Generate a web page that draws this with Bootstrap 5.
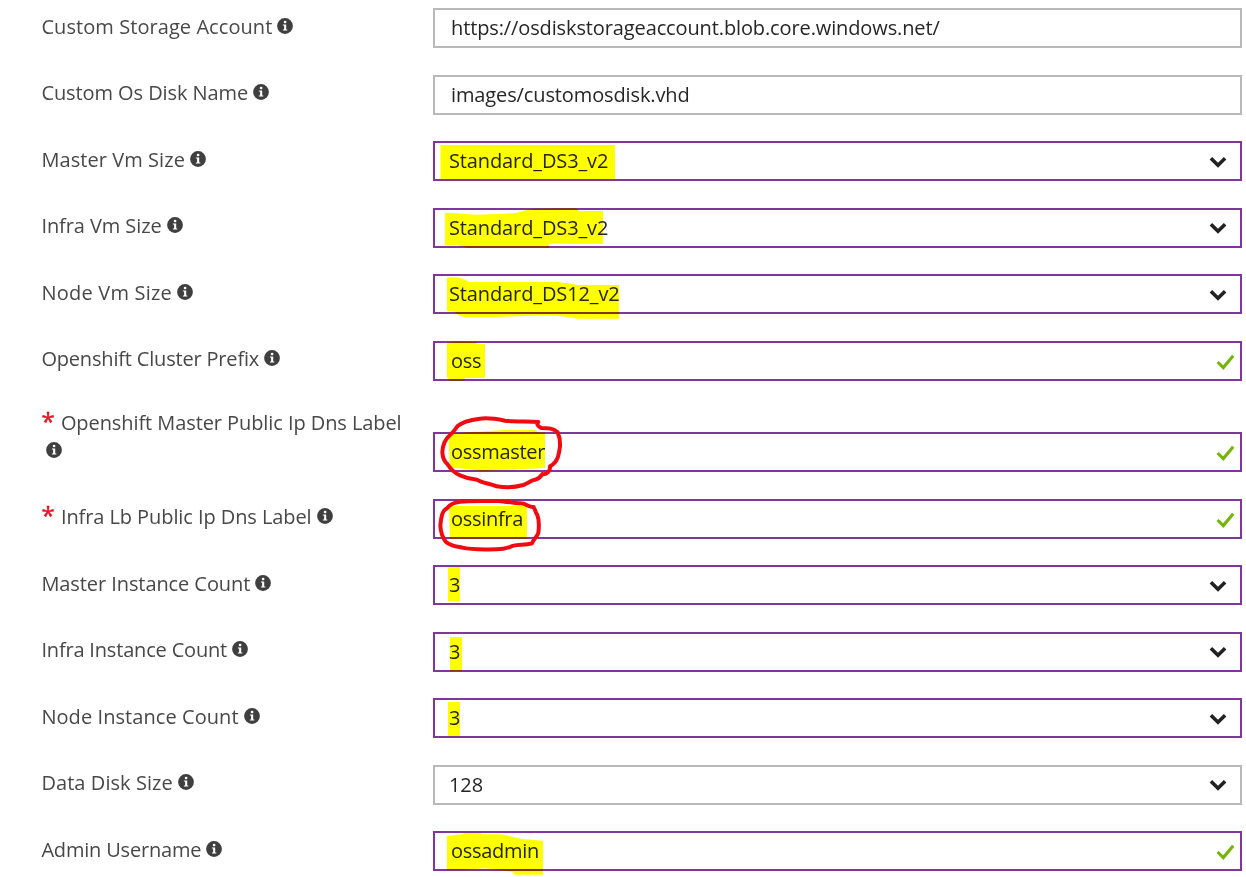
<!DOCTYPE html>
<html lang="en">
<head>
<meta charset="utf-8">
<meta name="viewport" content="width=device-width, initial-scale=1">
<title>Template parameters</title>
<link href="https://cdn.jsdelivr.net/npm/bootstrap@5.3.0/dist/css/bootstrap.min.css" rel="stylesheet">
<style>
  body { font-family: "Open Sans", "Noto Sans", sans-serif; font-size: 20px; line-height: 27.5px; color: #484848; background: #fff; overflow: hidden; }
  .param-form { padding: 8.25px 4px 0 41px; }
  .param-row { height: 66.5px; }
  .param-row.tall { height: 91.5px; }
  .param-row.tall .field { margin-top: 25px; }
  .param-label { width: 392px; padding: 4.5px 20px 0 .4px; letter-spacing: -.08px; }
  .param-label.loose { letter-spacing: .07px; }
  .param-label.looser { letter-spacing: .22px; }
  .param-label.snug { letter-spacing: -.18px; }
  .tall .param-label { padding-top: 1.8px; }
  .info { width: 16px; height: 16px; margin-left: 5px; vertical-align: 0; display: inline-block; }
  .req { color: #e81123; display: inline-block; width: 19.5px; font-size: 24px; line-height: 20px; letter-spacing: 0; -webkit-text-stroke: .5px #e81123; }
  .field { height: 40px; border: 2px solid #b9b9b9; color: #262626; padding: 0 16px 1px; letter-spacing: -.12px; }
  .field.edited { border-color: #80379b; }
  .field.choice { padding-left: 14px; padding-right: 13px; }
  .field.valid { padding-right: 5px; letter-spacing: -.3px; }
  .arrow { width: 18px; height: 12px; margin-top: 2px; }
  .tick { width: 19px; height: 16px; margin-top: 3px; }
  .ink { position: absolute; left: -2px; top: -2px; width: 200px; height: 40px; overflow: visible; pointer-events: none; }
  .marker { mix-blend-mode: multiply; fill: #ff0; }
  .pen { fill: none; stroke: #f00a12; stroke-width: 12; stroke-linejoin: round; stroke-linecap: round; }
</style>
</head>
<body>
<svg class="d-none">
  <symbol id="i-info" viewBox="0 0 16 16"><circle cx="8" cy="8" r="7.9" fill="#3f3f3f"/><circle cx="8.1" cy="4" r="1.35" fill="#fff"/><path d="M5.9 6.4h3.3v5h1.1v1.2H5.9v-1.2h1.2V7.6H5.9z" fill="#fff"/></symbol>
  <symbol id="i-arrow" viewBox="0 0 18 12"><path d="M1.9 2.2 9 9.2l7.1-7" fill="none" stroke="#222" stroke-width="3.6"/></symbol>
  <symbol id="i-tick" viewBox="0 0 19 16"><path d="M1.6 8 7.3 13.6 17.2 1.8" fill="none" stroke="#76b40c" stroke-width="3.1"/></symbol>
</svg>
<form class="param-form d-flex flex-column">
  <div class="param-row d-flex">
    <div class="param-label loose">Custom Storage Account<svg class="info"><use href="#i-info"/></svg></div>
    <div class="field flex-fill d-flex align-items-center">https://osdiskstorageaccount.blob.core.windows.net/</div>
  </div>
  <div class="param-row d-flex">
    <div class="param-label">Custom Os Disk Name<svg class="info"><use href="#i-info"/></svg></div>
    <div class="field flex-fill d-flex align-items-center">images/customosdisk.vhd</div>
  </div>
  <div class="param-row d-flex">
    <div class="param-label loose">Master Vm Size<svg class="info"><use href="#i-info"/></svg></div>
    <div class="field edited choice flex-fill d-flex align-items-center justify-content-between position-relative">
      <span>Standard_DS3_v2</span><svg class="arrow"><use href="#i-arrow"/></svg>
      <svg class="ink marker"><path d="M7.5 4H182V38H7.5z"/></svg>
    </div>
  </div>
  <div class="param-row d-flex">
    <div class="param-label">Infra Vm Size<svg class="info"><use href="#i-info"/></svg></div>
    <div class="field edited choice flex-fill d-flex align-items-center justify-content-between position-relative">
      <span>Standard_DS3_v2</span><svg class="arrow"><use href="#i-arrow"/></svg>
      <svg class="ink marker"><path d="M12 4.7Q27 5 42 6.700L82 5.300Q92 2 102 .7L143 .3 146 3H170V36L120 35.500 116 36.500V39.700H35L25 37.300H12z"/></svg>
    </div>
  </div>
  <div class="param-row d-flex">
    <div class="param-label looser">Node Vm Size<svg class="info"><use href="#i-info"/></svg></div>
    <div class="field edited choice flex-fill d-flex align-items-center justify-content-between position-relative">
      <span>Standard_DS12_v2</span><svg class="arrow"><use href="#i-arrow"/></svg>
      <svg class="ink marker"><path d="M14 3.500Q28 2 36 8H125Q135 9 145 11H186V44.700H145Q125 41 112 41.500L62 43H31Q25 42 22 38L14 36.700z"/></svg>
    </div>
  </div>
  <div class="param-row d-flex">
    <div class="param-label snug">Openshift Cluster Prefix<svg class="info"><use href="#i-info"/></svg></div>
    <div class="field edited valid flex-fill d-flex align-items-center justify-content-between position-relative">
      <span>oss</span><svg class="tick"><use href="#i-tick"/></svg>
      <svg class="ink marker"><path d="M14 1.700 22 1H42L44 3H52V36.700L32 37 31 39.700H17L14 36z"/></svg>
    </div>
  </div>
  <div class="param-row tall d-flex">
    <div class="param-label"><span class="req">*</span>Openshift Master Public Ip Dns Label <svg class="info"><use href="#i-info"/></svg></div>
    <div class="field edited valid flex-fill d-flex align-items-center justify-content-between position-relative">
      <span>ossmaster</span><svg class="tick"><use href="#i-tick"/></svg>
      <svg class="ink marker"><path d="M15.300 2 35 .3 72-2H102L105 .5H112V36L95 36.700 69 38 49 39 32 36.700 17 35.700z"/></svg>
      <svg class="ink"><path class="pen" transform="translate(-8 -32) scale(.33333)" d="M340 66C315 64 265 65 240 62C215 57 190 53 165 56C135 60 110 67 98 78C88 91 83 99 75 105C60 118 53 134 52 157C53 175 59 185 67 192C75 205 86 218 105 226C123 234 139 238 156 239C175 250 197 251 215 259C239 263 272 262 295 255C309 250 316 242 330 239C343 238 346 231 352 222C365 225 377 212 375 199C399 186 402 163 405 138C406 116 402 106 398 97C385 85 371 84 349 84C338 80 335 71 338 66"/></svg>
    </div>
  </div>
  <div class="param-row d-flex">
    <div class="param-label"><span class="req">*</span>Infra Lb Public Ip Dns Label<svg class="info"><use href="#i-info"/></svg></div>
    <div class="field edited valid flex-fill d-flex align-items-center justify-content-between position-relative">
      <span>ossinfra</span><svg class="tick"><use href="#i-tick"/></svg>
      <svg class="ink marker"><path d="M16 7H94V39.700H17z"/></svg>
      <svg class="ink"><path class="pen" transform="translate(-8 -99) scale(.33333)" d="M326 321C308 321 305 311 288 310C270 308 240 306 222 303C185 304 135 302 105 305C82 308 73 315 68 323C50 332 49 352 46 376C47 398 51 410 62 425C75 438 92 439 112 443C140 450 171 448 215 448C244 448 249 442 266 437C281 432 300 436 321 430C325 417 337 410 340 398C343 375 342 358 337 345C329 337 334 327 323 321"/></svg>
    </div>
  </div>
  <div class="param-row d-flex">
    <div class="param-label">Master Instance Count<svg class="info"><use href="#i-info"/></svg></div>
    <div class="field edited choice flex-fill d-flex align-items-center justify-content-between position-relative">
      <span>3</span><svg class="arrow"><use href="#i-arrow"/></svg>
      <svg class="ink marker"><path d="M15 2H27V36H15z"/></svg>
    </div>
  </div>
  <div class="param-row d-flex">
    <div class="param-label snug">Infra Instance Count<svg class="info"><use href="#i-info"/></svg></div>
    <div class="field edited choice flex-fill d-flex align-items-center justify-content-between position-relative">
      <span>3</span><svg class="arrow"><use href="#i-arrow"/></svg>
      <svg class="ink marker"><path d="M17 5H29V39H17z"/></svg>
    </div>
  </div>
  <div class="param-row d-flex">
    <div class="param-label loose">Node Instance Count<svg class="info"><use href="#i-info"/></svg></div>
    <div class="field edited choice flex-fill d-flex align-items-center justify-content-between position-relative">
      <span>3</span><svg class="arrow"><use href="#i-arrow"/></svg>
      <svg class="ink marker"><path d="M15 4H27V38H15z"/></svg>
    </div>
  </div>
  <div class="param-row d-flex">
    <div class="param-label loose">Data Disk Size<svg class="info"><use href="#i-info"/></svg></div>
    <div class="field choice flex-fill d-flex align-items-center justify-content-between">
      <span>128</span><svg class="arrow"><use href="#i-arrow"/></svg>
    </div>
  </div>
  <div class="param-row d-flex">
    <div class="param-label snug">Admin Username<svg class="info"><use href="#i-info"/></svg></div>
    <div class="field edited valid flex-fill d-flex align-items-center justify-content-between position-relative">
      <span>ossadmin</span><svg class="tick"><use href="#i-tick"/></svg>
      <svg class="ink marker"><path d="M14 5 30 3 32 2H47L49 3.300H69L89 8 110 9.700V43.700H82L79 40.700 52 37.300 29 39H14z"/></svg>
    </div>
  </div>
</form>
<script src="https://cdn.jsdelivr.net/npm/bootstrap@5.3.0/dist/js/bootstrap.bundle.min.js"></script>
</body>
</html>
